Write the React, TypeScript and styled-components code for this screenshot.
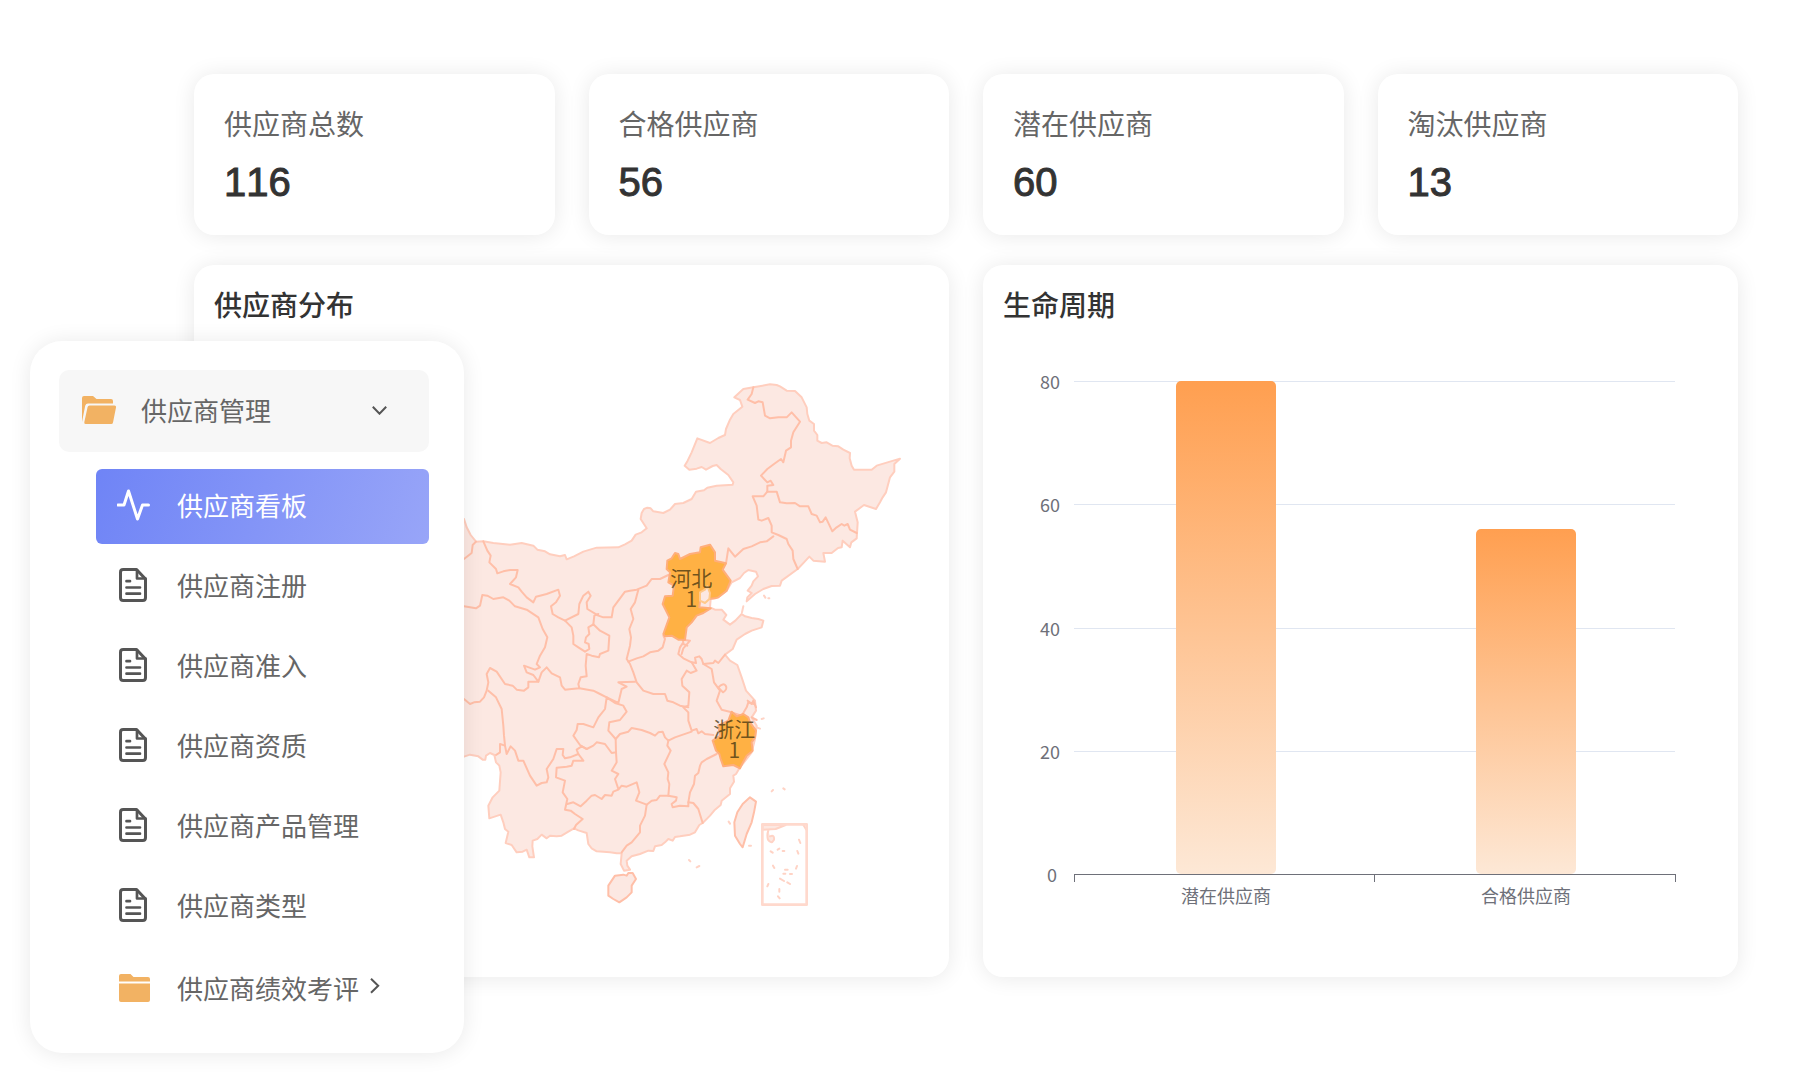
import React from "react";
import styled, { createGlobalStyle } from "styled-components";

const GlobalStyle = createGlobalStyle`
  *, *::before, *::after { box-sizing: border-box; }
  body {
    margin: 0;
    background: #fff;
    color: #333;
    font-family: "Liberation Sans", "Noto Sans CJK SC", sans-serif;
  }
`;

const cjk = '"Noto Sans CJK SC", sans-serif';

const Page = styled.div`
  position: relative;
  min-height: 100vh;
  padding: 74px 64px 30px 194px;
`;

const Dashboard = styled.main`
  display: grid;
  grid-template-columns: repeat(4, 1fr);
  gap: 30px 34px;
`;

const Card = styled.section`
  background: #fff;
  border-radius: 20px;
  box-shadow: 0 1px 22px rgba(0, 0, 0, 0.09);
`;

const StatCard = styled(Card)`
  display: flex;
  flex-direction: column;
  gap: 16px;
  padding: 29px 30px;
`;

const StatLabel = styled.h2`
  margin: 0;
  font: 400 28px/40px ${cjk};
  color: #666;
`;

const StatValue = styled.p`
  margin: 0;
  font-size: 40px;
  line-height: 47px;
  font-kerning: none;
  -webkit-text-stroke: 1px #333;
`;

const Panel = styled(Card)`
  grid-column: span 2;
  display: flex;
  flex-direction: column;
  height: 712px;
`;

const PanelTitle = styled.h2`
  margin: 0;
  padding: 19px 20px 0;
  font: 500 28px/40px ${cjk};
`;

const MapBox = styled.div`
  display: flex;
  justify-content: flex-end;
  padding: 25px 29px 0 0;
`;

const Drawing = styled.svg`
  display: block;
`;

const ChartDrawing = styled.svg`
  display: block;
  width: 100%;
  font: 400 18px ${cjk};
`;

const Sidebar = styled.nav`
  position: absolute;
  left: 30px;
  top: 341px;
  width: 434px;
  padding: 29px 35px 27px 29px;
  border-radius: 32px;
  background: #fff;
  box-shadow: 0 1px 22px rgba(0, 0, 0, 0.09);
`;

const MenuButton = styled.button`
  display: flex;
  align-items: center;
  gap: 26px;
  width: 100%;
  border: 0;
  text-align: left;
  cursor: pointer;
  color: #666;
  font: 400 26px/40px ${cjk};
`;

const GroupButton = styled(MenuButton)`
  height: 82px;
  padding: 0 42px 2px 22px;
  border-radius: 10px;
  background: #f7f7f7;

  & > svg:last-child { margin-left: auto; }
`;

const Menu = styled.ul`
  display: flex;
  flex-direction: column;
  gap: 5px;
  margin: 17px 0 0;
  padding: 0 0 0 37px;
  list-style: none;
`;

const ItemButton = styled(MenuButton)<{ $active?: boolean }>`
  height: 75px;
  padding: 0 21px 4px;
  border-radius: 6px;
  background: ${(p) => (p.$active ? "linear-gradient(110deg, #6f84f6, #98a5f8)" : "transparent")};
  color: ${(p) => (p.$active ? "#fff" : "#666")};
`;

const SubmenuButton = styled(ItemButton)`
  height: 77px;
  padding-bottom: 0;
`;

const ItemText = styled.span`
  display: flex;
  align-items: center;
  gap: 11px;
  white-space: nowrap;
`;

const FolderOpenIcon = () => (
  <Drawing width="34" height="30" viewBox="0 0 34 30" fill="#f2b263" overflow="visible" aria-hidden="true">
    <path d="M1 27V3q0-2 2-2h9l3.500 3H30q2 0 2 2v2.500H7q-2.200 0-2.800 2.200z" />
    <path d="M8.500 10.500H33.500q2 0 1.500 2l-3 15q-.3 1.500-1.800 1.500H4.500q-1.600 0-1.200-1.700L6.600 12q.4-1.500 1.900-1.500z" />
  </Drawing>
);

const FolderIcon = () => (
  <Drawing width="34" height="30" viewBox="0 0 34 30" fill="#f2b263" aria-hidden="true">
    <path d="M2 8.500V3q0-2 2-2h9.500l3 3H31q2 0 2 2v2.500zM2 10.500h31V27q0 2-2 2H4q-2 0-2-2z" />
  </Drawing>
);

const FileIcon = () => (
  <Drawing width="34" height="36" viewBox="0 0 34 36" fill="none" stroke="#555" strokeWidth="3" strokeLinecap="round" strokeLinejoin="round" aria-hidden="true">
    <path d="M19.500 2.500H6.200q-2.700 0-2.700 2.700v25.600q0 2.700 2.700 2.700h19.600q2.700 0 2.700-2.700V12z" />
    <path d="M20 3v8.500h8.500M9.500 14.200h3.500M9.500 20.500h13.500M9.500 26.700h13.500" strokeWidth="2.700" />
  </Drawing>
);

const PulseIcon = () => (
  <Drawing width="34" height="34" viewBox="0 0 34 34" fill="none" stroke="#fff" strokeWidth="3" strokeLinecap="round" strokeLinejoin="round" aria-hidden="true">
    <path d="M1 17h6L11.500 3 20.500 31 25.500 17h6" />
  </Drawing>
);

const ChevronDown = () => (
  <Drawing width="15" height="10" viewBox="0 0 15 10" fill="none" stroke="#555" strokeWidth="2" aria-hidden="true">
    <path d="M.8 1.700 7.500 8.700 14.200 1.700" />
  </Drawing>
);

const ChevronRight = () => (
  <Drawing width="10" height="20" viewBox="0 0 10 20" fill="none" stroke="#555" strokeWidth="2" aria-hidden="true">
    <path d="M1 .8 8.200 7.800 1 14.800" />
  </Drawing>
);

const mainland =
  "M-20 430 42 450 50 475 62 498 78 518 100 517 130 522 180 527 215 522 250 530 262 542 285 547 300 556 330 562 345 558 350 571 372 562 400 548 440 536 505 535 525 526 545 515 557 497 575 490 590 478 572 450 575 432 582 420 592 416 602 418 610 427 640 432 660 422 675 405 700 402 725 390 738 368 762 364 772 356 800 350 848 347 850 340 835 318 812 300 800 288 788 291 768 302 755 294 740 299 718 302 704 290 713 275 725 250 742 208 780 222 805 207 825 198 828 180 840 152 850 135 877 113 870 93 853 85 880 60 910 55 960 46 980 48 990 52 1010 65 1035 66 1055 85 1070 115 1072 135 1078 155 1092 165 1092 185 1102 198 1102 215 1115 222 1130 220 1147 230 1165 232 1180 242 1200 252 1199 268 1205 290 1212 302 1265 302 1280 290 1330 275 1350 269 1333 285 1333 308 1320 325 1308 370 1298 385 1290 400 1278 420 1242 408 1215 428 1223 460 1220 508 1204 520 1200 535 1178 515 1175 535 1164 537 1145 552 1120 552 1125 578 1090 575 1078 563 1062 580 1043 600 995 635 990 650 965 651 940 660 915 675 890 697 892 685 905 672 893 665 905 650 910 637 924 622 918 608 895 603 882 612 870 627 845 640 830 665 805 685 782 690 780 715 795 722 815 722 829 738 820 752 840 767 856 755 875 735 885 742 905 747 925 750 940 755 935 775 905 785 885 795 860 812 848 840 825 857 840 875 862 888 875 925 888 965 915 995 918 1025 905 1045 920 1070 915 1110 905 1150 890 1170 870 1195 858 1215 850 1220 852 1238 840 1258 840 1275 815 1295 812 1308 795 1322 780 1340 758 1362 748 1368 735 1390 720 1397 700 1400 690 1402 675 1404 668 1415 655 1410 645 1420 635 1428 615 1432 610 1446 595 1445 570 1455 545 1462 530 1475 532 1490 540 1502 522 1505 512 1485 515 1453 500 1453 480 1450 440 1447 425 1438 415 1425 410 1392 385 1384 372 1378 355 1388 335 1400 320 1402 300 1400 290 1408 275 1397 262 1410 248 1415 247 1432 252 1465 238 1465 230 1442 218 1448 200 1450 185 1428 167 1422 175 1388 165 1380 160 1360 152 1337 118 1348 115 1310 128 1285 148 1265 152 1210 148 1190 138 1180 133 1158 120 1152 108 1160 106 1172 98 1172 85 1162 60 1157 42 1163 -20 1160Z";

const borders = [
  "M42 570 65 552 68 528 78 518",
  "M100 517 112 545 122 560 118 580 138 600 142 613 160 607 180 603 203 603 198 625 180 645 205 655 215 668 230 685 250 700 258 683 290 675 325 662 330 680 318 700 303 712 308 735 325 745 345 755 385 735 388 705 400 680 415 668 422 680 410 700 412 720 445 740 460 745 485 745 490 715 510 688 525 668 540 665 560 662 590 650 605 630 630 630 655 618",
  "M565 662 555 700 542 720 550 750 538 780 543 805 540 830 530 870 540 885 550 910 560 940 580 965 610 975 645 975 652 995 670 1000 690 1010 715 1015",
  "M42 712 78 718 90 710 97 678 112 680 130 690 160 685 178 695 195 712 230 722 265 745 278 780 292 805 285 835 270 860 260 885 270 895 255 902 222 890 230 910 250 918 265 938 235 938 235 955 222 965 200 962 188 950 165 945 140 908 120 897 110 915 115 940 110 965 102 985 90 998 72 1000 60 1005 42 990",
  "M345 755 365 775 370 800 370 825 385 835 405 848 418 840 416 825 405 820 408 805 418 795 415 775 430 766 450 785 478 800 475 845 450 855 447 865 425 860 410 855 407 890 410 922 392 925 385 945 388 958 365 960 345 962 335 950 330 925 305 913 290 895 275 910 265 938",
  "M430 766 433 740 445 735",
  "M388 958 430 965 450 975 470 985 505 1002 515 960 530 953 505 940 555 938",
  "M470 985 465 1020 445 1045 430 1075 400 1065 383 1065 380 1083 370 1100 390 1128 410 1140 430 1130 440 1120 465 1125 485 1152 498 1150 497 1110 475 1085 478 1060 510 1053 530 1028 520 1010 495 1002 470 985",
  "M115 965 138 985 155 1020 160 1070 162 1100 165 1130 150 1125 150 1150 138 1158",
  "M165 1130 170 1155 182 1132 195 1145 205 1175 220 1175 240 1220 260 1250 275 1242 290 1240 295 1225 290 1200 310 1170 320 1140 340 1140 338 1158 345 1168 360 1165 385 1155 400 1175 370 1175 365 1190 350 1193 320 1196 318 1225 345 1235 338 1270 352 1290 345 1322 362 1325 375 1335 398 1350 378 1368 372 1380",
  "M385 1155 380 1142 395 1132 410 1140",
  "M498 1150 500 1180 485 1205 505 1215 495 1230 505 1260",
  "M352 1305 370 1300 392 1312 410 1295 425 1280 435 1278 455 1290 465 1278 485 1280 490 1268 505 1262 515 1250 530 1253 560 1240 568 1270 558 1295 590 1307 585 1340 570 1370 570 1390 545 1420 530 1430 515 1450",
  "M497 1110 510 1095 535 1088 545 1077 575 1083 600 1092 615 1100 625 1090 638 1088 645 1105 655 1115 675 1105 690 1100 725 1088",
  "M655 1115 652 1130 662 1145 643 1185 655 1210 653 1230 658 1245 655 1280",
  "M590 1307 605 1295 620 1293 630 1280 655 1280 680 1285 678 1295 665 1305 668 1315 690 1310 715 1312 715 1300 720 1270 732 1245 735 1220 745 1212 750 1190 755 1180 770 1170 800 1155",
  "M715 1300 730 1302 745 1320 758 1362",
  "M640 800 645 810 638 835 625 845 600 850 580 862 560 868 535 878",
  "M695 800 700 820 690 835 685 855 700 868 725 880 738 882 735 866 748 862 755 870 760 885 790 882 795 875 805 882 825 857",
  "M700 812 720 815 700 838 695 855 M700 825 712 830",
  "M725 880 740 905 722 912 710 905 695 930 697 950 718 970 715 1010 700 1015 715 1030 715 1055 725 1085 740 1080 745 1093 755 1087 765 1095 790 1098",
  "M760 885 785 900 792 940 810 965 800 995 815 1022 845 1030 875 1040 890 1015 895 1000 912 1005",
  "M805 955q15-15 22-5t-8 20zM893 995l12 10 5-10 8 20M905 1045l15 8",
  "M910 55 905 75 893 92 915 102 925 97 938 100 945 140 960 148 985 145 1010 145 1025 130 1050 158 1030 190 1023 215 1023 235 1008 245 1000 280 993 270 972 285 952 300 933 320 952 340 962 335 970 348 952 350 952 368 980 368 990 400 1010 403 1035 402 1050 412 1075 412 1085 435 1100 440 1110 460 1118 458 1127 445 1147 487 1160 475 1175 465 1183 470 1193 465 1200 482 1220 492",
  "M952 368 940 382 908 382 920 410 925 452 935 455 955 447 965 470 965 490 985 498 1010 510 1015 525 1028 545 1030 570 1043 600",
  "M970 502 950 517 930 520 905 532 880 540 855 563 835 538 828 583",
];

const hebei =
  "M828 583 818 602 842 635 830 665 805 685 795 688 775 690 750 697 748 715 782 718 760 732 740 740 725 760 710 775 705 812 685 812 665 800 645 802 640 795 658 745 638 705 645 682 668 680 672 650 655 640 660 610 650 600 652 575 665 568 675 552 685 555 690 570 720 555 750 550 752 535 780 527 795 550 795 575Z";

const zhejiang =
  "M845 1028 860 1042 880 1035 895 1045 900 1060 918 1085 915 1105 905 1120 908 1145 890 1160 880 1178 870 1198 850 1188 820 1192 812 1170 808 1155 798 1145 788 1115 810 1100 805 1070 835 1055Z";

const islands = [
  "M900 1285 918 1298 912 1330 905 1360 890 1395 878 1435 870 1425 855 1400 853 1360 862 1330 878 1305Z",
  "M495 1520 520 1517 530 1520 535 1512 548 1512 558 1530 545 1550 545 1570 530 1585 508 1600 490 1590 475 1580 475 1550Z",
];

const specks =
  "M937 1368h70l-30 12-40 2zM1060 1367l8 14M955 1385q-5 12-1 27 10 15 18 0 2-16-12-10M1047 1412l4 10M962 1447l6 4M983 1442l5-3M998 1446h5M1042 1446l3 8M969 1490l4 7M1005 1502h8M1000 1514h6M990 1529l12 7M1012 1540l8 5M1020 1515h6M1038 1499l3-8M952 1552l3-7M984 1582l5 6M988 1560v8M717 1473l4 4M740 1495l8-4M836 1358l4 6M965 1267l4-4M1000 1258l4 3M942 680l4 6M955 688h3M880 712l-4 18M935 1050l6-2M920 1075l10 4M897 1430h6";

const ChinaMap = () => (
  <Drawing width="484" height="560" viewBox="-42 -60 1452 1680" role="img" aria-label="供应商分布地图">
    <g fill="#fce8e2" stroke="#ffbfa8" strokeWidth="6" strokeLinejoin="round" strokeLinecap="round">
      <path d={mainland} stroke="#ffcebe" />
      {islands.map((d) => <path key={d} d={d} />)}
      {borders.map((d) => <path key={d} d={d} fill="none" />)}
      <path d={hebei} fill="#ffb144" stroke="#ffae7c" />
      <path d="M750 670 765 662 772 652 780 672 778 690 765 702 750 695Z" stroke="#ffc98a" />
      <path d={zhejiang} fill="#ffb144" stroke="#ffae7c" />
      <path d={specks} stroke="#ffd3c5" />
      <rect x="937" y="1366" width="133" height="241" fill="none" stroke="#ffd9cd" strokeWidth="8" />
    </g>
    <g fill="#423410" fillOpacity=".75" fontFamily='"Noto Sans CJK SC", sans-serif' fontSize="63" textAnchor="middle">
      <text>
        <tspan x="724" y="652">河北</tspan>
        <tspan x="724" y="714">1</tspan>
      </text>
      <text>
        <tspan x="853" y="1105">浙江</tspan>
        <tspan x="853" y="1167">1</tspan>
      </text>
    </g>
  </Drawing>
);

const ticks = [80, 60, 40, 20, 0];
const bars = [
  { name: "潜在供应商", value: 80 },
  { name: "合格供应商", value: 56 },
];

const BASE = 550;
const LEFT = 91;
const RIGHT = 692;
const SLOT = (RIGHT - LEFT) / bars.length;
const yOf = (v: number) => BASE - (v * 493) / 80;

const LifecycleChart = () => (
  <ChartDrawing viewBox="0 0 755 620" role="img" aria-label="生命周期柱状图">
    <defs>
      <linearGradient id="bar" x1="0" y1="0" x2="0" y2="1">
        <stop offset="0" stopColor="#ff9f50" />
        <stop offset="1" stopColor="#fde8d6" />
      </linearGradient>
    </defs>
    {ticks.map((t) => (
      <g key={t}>
        {t > 0 && <path d={`M${LEFT} ${Math.round(yOf(t)) + 0.5}H${RIGHT}`} stroke="#e0e6f1" />}
        <text x={t > 0 ? 77 : 74} y={Math.round(yOf(t)) + 8} textAnchor="end" fill="#6e7079">{t}</text>
      </g>
    ))}
    <path d={`M${LEFT} ${BASE + 0.5}H${RIGHT}`} stroke="#6e7079" />
    {[0, 1, 2].map((i) => (
      <path key={i} d={`M${Math.floor(LEFT + i * SLOT) + 0.5} ${BASE}v8`} stroke="#6e7079" />
    ))}
    {bars.map((b, i) => {
      const mid = Math.floor(LEFT + SLOT * (i + 0.5)) + 2;
      const top = Math.round(yOf(b.value));
      return (
        <g key={b.name}>
          <rect x={mid - 50} y={top} width="100" height={BASE - top} rx="5" fill="url(#bar)" />
          <text x={mid} y={BASE + 29} textAnchor="middle" fill="#6e7079">{b.name}</text>
        </g>
      );
    })}
  </ChartDrawing>
);

const stats = [
  { label: "供应商总数", value: 116 },
  { label: "合格供应商", value: 56 },
  { label: "潜在供应商", value: 60 },
  { label: "淘汰供应商", value: 13 },
];

const pages = ["供应商注册", "供应商准入", "供应商资质", "供应商产品管理", "供应商类型"];

export default function App() {
  return (
    <Page>
      <GlobalStyle />
      <Dashboard>
        {stats.map((s) => (
          <StatCard key={s.label}>
            <StatLabel>{s.label}</StatLabel>
            <StatValue>{s.value}</StatValue>
          </StatCard>
        ))}
        <Panel>
          <PanelTitle>供应商分布</PanelTitle>
          <MapBox>
            <ChinaMap />
          </MapBox>
        </Panel>
        <Panel>
          <PanelTitle>生命周期</PanelTitle>
          <LifecycleChart />
        </Panel>
      </Dashboard>
      <Sidebar aria-label="供应商管理">
        <GroupButton type="button" aria-expanded="true">
          <FolderOpenIcon />
          供应商管理
          <ChevronDown />
        </GroupButton>
        <Menu>
          <li>
            <ItemButton type="button" $active aria-current="page">
              <PulseIcon />
              <ItemText>供应商看板</ItemText>
            </ItemButton>
          </li>
          {pages.map((name) => (
            <li key={name}>
              <ItemButton type="button">
                <FileIcon />
                <ItemText>{name}</ItemText>
              </ItemButton>
            </li>
          ))}
          <li>
            <SubmenuButton type="button" aria-expanded="false">
              <FolderIcon />
              <ItemText>
                供应商绩效考评
                <ChevronRight />
              </ItemText>
            </SubmenuButton>
          </li>
        </Menu>
      </Sidebar>
    </Page>
  );
}
